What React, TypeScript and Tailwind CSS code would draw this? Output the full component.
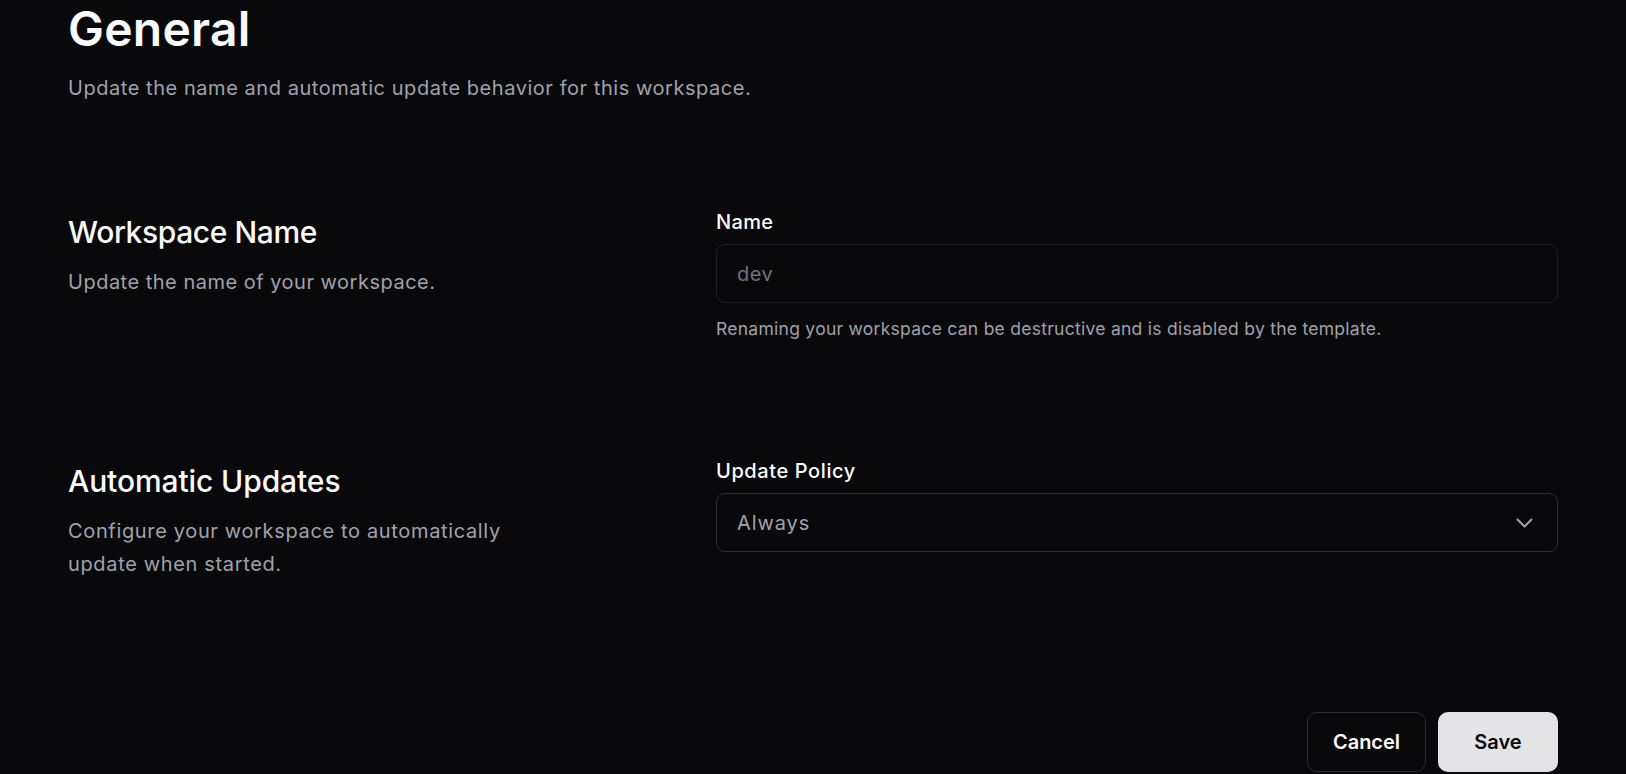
import React from "react";

export default function App() {
  return (
    <div
      className="min-h-screen w-full bg-[#09090b] px-[68px] text-[#fafafa]"
      style={{ fontFamily: "Inter, 'Noto Sans', sans-serif" }}
    >
      <div className="pt-[3px]">
        <h1 className="text-[48px] leading-[52px] font-semibold tracking-[0.005em]">General</h1>
        <p className="mt-[19px] text-[20px] leading-[28px] tracking-[0.55px] text-[#a1a1aa]">
          Update the name and automatic update behavior for this workspace.
        </p>
      </div>

      <section className="mt-[106px] flex items-start">
        <div className="w-[648px] shrink-0 pt-[6px]">
          <h2 className="text-[30px] leading-[36px] font-medium tracking-[-0.4px]">Workspace Name</h2>
          <p className="mt-[16px] text-[20px] leading-[32px] tracking-[0.5px] text-[#a1a1aa]">
            Update the name of your workspace.
          </p>
        </div>
        <div className="flex-1">
          <label className="block text-[20px] leading-[28px] font-medium tracking-[0.35px]">Name</label>
          <div className="mt-[8px] flex h-[59px] items-center rounded-[9px] border border-[#202023] px-[20px] text-[20px] tracking-[0.5px] text-[#71717a]">
            dev
          </div>
          <p className="mt-[13px] text-[17.5px] leading-[25px] tracking-[0.27px] text-[#a1a1aa]">
            Renaming your workspace can be destructive and is disabled by the template.
          </p>
        </div>
      </section>

      <section className="mt-[116px] flex items-start">
        <div className="w-[648px] shrink-0 pt-[6px]">
          <h2 className="text-[30px] leading-[36px] font-medium tracking-[-0.1px]">Automatic Updates</h2>
          <p className="mt-[16px] w-[460px] text-[20px] leading-[33px] tracking-[0.65px] text-[#a1a1aa]">
            Configure your workspace to automatically update when started.
          </p>
        </div>
        <div className="flex-1">
          <label className="block text-[20px] leading-[28px] font-medium tracking-[0.6px]">Update Policy</label>
          <div className="mt-[8px] flex h-[59px] items-center justify-between rounded-[9px] border border-[#2c2c31] pl-[20px] pr-[24px] text-[20px] tracking-[0.9px] text-[#a1a1aa]">
            <span>Always</span>
            <svg width="17" height="10" viewBox="0 0 17 10" fill="none">
              <path
                d="M1.5 1.5 L8.5 8.5 L15.5 1.5"
                stroke="#a1a1aa"
                strokeWidth="2"
                strokeLinecap="round"
                strokeLinejoin="round"
              />
            </svg>
          </div>
        </div>
      </section>

      <div className="mt-[131px] flex justify-end gap-[12px]">
        <button className="flex h-[60px] w-[119px] items-center justify-center rounded-[10px] border border-[#2c2c31] bg-[#09090b] text-[20px] font-semibold text-[#fafafa]">
          Cancel
        </button>
        <button className="flex h-[60px] w-[120px] items-center justify-center rounded-[10px] bg-[#e4e4e7] text-[20px] font-semibold text-[#09090b]">
          Save
        </button>
      </div>
    </div>
  );
}
